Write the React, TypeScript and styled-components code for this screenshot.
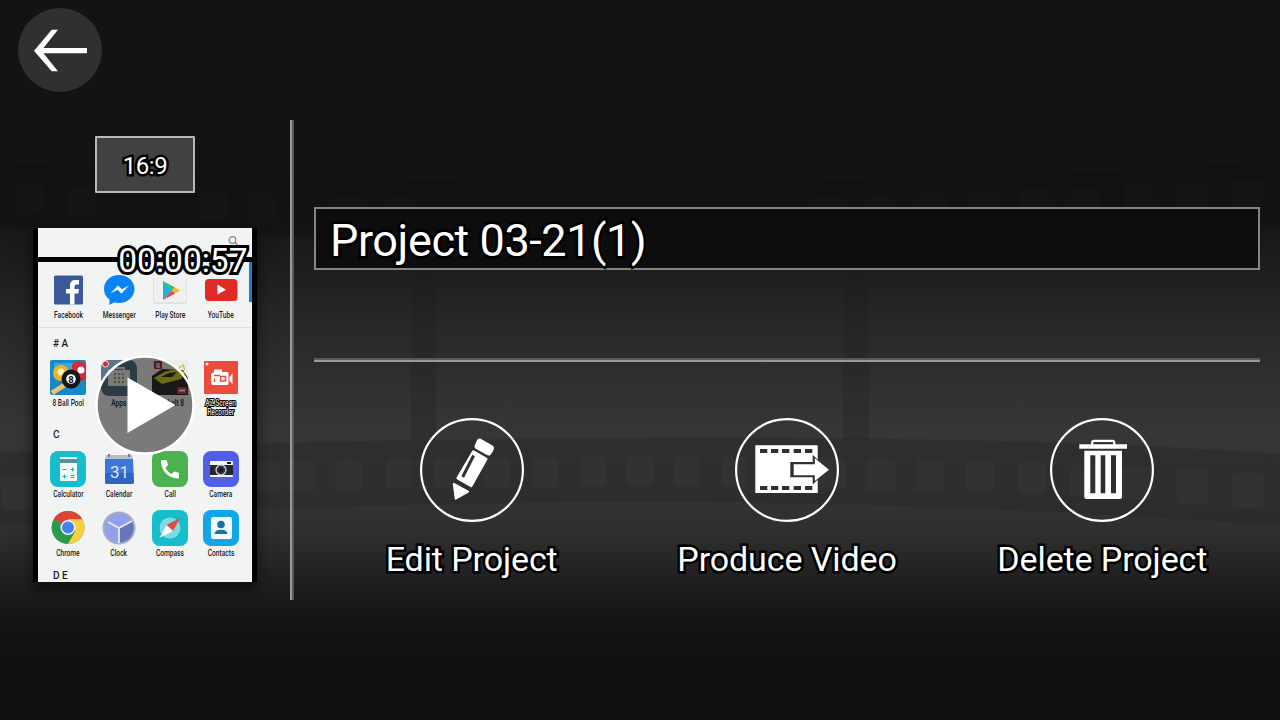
import React from 'react';
import styled, { createGlobalStyle, css } from 'styled-components';

const GlobalStyle = createGlobalStyle`
  * { box-sizing: border-box; }
  body { margin: 0; background: #111; font-family: Roboto, "Liberation Sans", sans-serif; color: #fff; }
`;

const Page = styled.main`
  position: relative;
  width: 1280px;
  height: 720px;
  overflow: hidden;
  display: flex;
  flex-direction: column;
  background: linear-gradient(
    180deg,
    #131313 0, #131313 180px, #161616 215px, #1e1e1e 270px, #282828 325px,
    #303030 385px, #363636 430px, #343434 490px, #2f2f2f 530px, #262626 560px,
    #1c1c1c 592px, #151515 620px, #111 650px, #0f0f0f 720px
  );
`;

const Backdrop = styled.svg`
  position: absolute;
  inset: 0;
`;

const outlined = css<{ $outline?: number }>`
  -webkit-text-stroke: ${({ $outline = 5 }) => $outline}px #000;
  paint-order: stroke fill;
`;

const Header = styled.header`
  position: relative;
  height: 120px;
  padding: 8px 18px;
`;

const BackButton = styled.button`
  display: block;
  width: 84px;
  height: 84px;
  padding: 0;
  border: 0;
  border-radius: 50%;
  background: #303030;
`;

const Body = styled.div`
  position: relative;
  display: flex;
  height: 480px;
`;

const Sidebar = styled.aside`
  width: 290px;
  padding-top: 16px;
  display: flex;
  flex-direction: column;
  align-items: center;
  gap: 35px;
`;

const Ratio = styled.div`
  width: 100px;
  height: 57px;
  border: 2px solid #b8b8b8;
  border-radius: 1px;
  background: #414141;
  display: flex;
  align-items: center;
  justify-content: center;
  font-size: 24px;
  line-height: 28px;
  letter-spacing: -0.4px;
  padding-top: 2px;
  ${outlined}
`;

const VerticalRule = styled.div`
  width: 4px;
  border-left: 2px solid #999;
  border-right: 2px solid #595959;
`;

const Main = styled.section`
  flex: 1;
  padding: 87px 20px 0;
  display: flex;
  flex-direction: column;
`;

const NameField = styled.div`
  height: 63px;
  border: 2px solid #858585;
  background: #0d0d0d;
  padding: 4px 14px 0;
  font-size: 45px;
  line-height: 56px;
  letter-spacing: -0.42px;
  white-space: nowrap;
  ${outlined}
`;

const Rule = styled.div`
  height: 4px;
  margin: 88px 0 56px;
  border-top: 2px solid #595959;
  border-bottom: 2px solid #999;
`;

const Actions = styled.nav`
  display: grid;
  grid-template-columns: repeat(3, 1fr);
`;

const Action = styled.div`
  display: flex;
  flex-direction: column;
  align-items: center;
  gap: 17px;
`;

const ActionLabel = styled.span`
  font-size: 34px;
  line-height: 40px;
  letter-spacing: -0.1px;
  white-space: nowrap;
  ${outlined}
`;

const Preview = styled.div`
  position: relative;
  width: 224px;
  height: 354px;
  padding: 0 5px;
  background: #000;
  box-shadow: 0 6px 14px rgba(0, 0, 0, 0.55);
`;

const Screen = styled.div`
  height: 354px;
  overflow: hidden;
  background: #f2f4f3;
  color: #1c1c1c;
`;

const SearchBar = styled.div`
  height: 34px;
  display: flex;
  justify-content: flex-end;
  padding: 7px 13px 0 0;
  border-bottom: 5px solid #000;
`;

const AppGrid = styled.div<{ $height: number; $top?: number; $line?: boolean }>`
  display: grid;
  grid-template-columns: repeat(4, 51px);
  height: ${({ $height }) => $height}px;
  padding: ${({ $top = 0 }) => $top}px 0 0 4.5px;
  border-bottom: ${({ $line }) => ($line ? '1px solid #dfe1e0' : '0')};
`;

const AppCell = styled.div`
  display: flex;
  flex-direction: column;
  align-items: center;
  svg { flex: none; display: block; overflow: visible; margin-left: -1px; }
`;

const AppLabel = styled.span<{ $selected?: boolean }>`
  margin-top: 3px;
  font-size: 8.5px;
  line-height: 8.5px;
  font-weight: 500;
  text-align: center;
  white-space: pre;
  transform: translateY(0.4px) scaleX(0.78);
  ${({ $selected }) =>
    $selected && css`color: #ddd; -webkit-text-stroke: 2.2px #000; paint-order: stroke fill;`}
`;

const Section = styled.div<{ $height: number; $top: number }>`
  height: ${({ $height }) => $height}px;
  padding: ${({ $top }) => $top}px 0 0 15px;
  font-size: 10px;
  line-height: 12px;
  font-weight: 500;
`;

const ScrollMark = styled.div`
  position: absolute;
  top: 34px;
  right: 5px;
  width: 3px;
  height: 40px;
  background: #1d80cf;
`;

const Duration = styled.div`
  position: absolute;
  top: 13px;
  right: 9.5px;
  font-size: 33.5px;
  line-height: 40px;
  white-space: nowrap;
  -webkit-text-stroke: 6px #000;
  paint-order: stroke fill;
`;

const PlayButton = styled.svg`
  position: absolute;
  left: 62px;
  top: 127px;
`;

const squares: [number, number, number][] = [
  [17, 491, 32], [215, 479, 28], [265, 476, 28], [301, 474, 28], [349, 473, 27], [399, 472, 27],
  [447, 471, 27], [497, 471, 27], [545, 471, 27], [593, 470, 27], [640, 470, 27], [687, 470, 27],
  [735, 470, 27], [784, 471, 27], [833, 472, 27], [881, 473, 28], [930, 474, 28], [980, 475, 28],
  [1032, 477, 29], [1085, 479, 29], [1137, 482, 30], [1192, 485, 31], [1248, 489, 32],
];
const topSquares: [number, number][] = [
  [30, 198], [82, 201], [213, 206], [262, 208], [350, 211], [400, 212], [830, 211], [880, 210], [933, 208],
  [983, 206], [1034, 204], [1085, 202], [1139, 200], [1192, 198], [1248, 195],
];

const FilmBackdrop = () => (
  <Backdrop width="1280" height="720" viewBox="0 0 1280 720">
    <path d="M0 162Q250 182 640 182T1280 160V225Q960 240 640 240T0 228Z" fill="#101010" opacity=".5" />
    {topSquares.map(([x, y]) => (
      <rect key={x} x={x - 15} y={y - 15} width="30" height="30" rx="4" fill="#1a1a1a" opacity=".25" />
    ))}
    <path d="M411 236H436V440H411ZM843 236H869V440H843Z" fill="#1c1c1c" opacity=".22" />
    <path d="M0 453Q250 440 640 438T1280 454V526Q960 502 640 502T0 524Z" fill="#262626" opacity=".4" />
    {squares.map(([x, y, s]) => (
      <rect key={x} x={x - s / 2} y={y - s / 2} width={s} height={s + 3} rx="4" fill="#3a3a3a" opacity=".42" />
    ))}
  </Backdrop>
);

const BackIcon = () => (
  <svg width="84" height="84" viewBox="0 0 84 84">
    <path fill="#fff" d="M16 42.7L33.7 21.7H39.9L25.5 40H69V45.3H25.5L39.9 63.3H33.7Z" />
  </svg>
);

const Ring = ({ children }: { children: React.ReactNode }) => (
  <svg width="104" height="104" viewBox="0 0 104 104">
    <circle cx="52" cy="52" r="50.9" fill="none" stroke="#fff" strokeWidth="2.2" />
    {children}
  </svg>
);

const PencilIcon = () => (
  <Ring>
    <g fill="#fff" stroke="#fff" strokeLinejoin="round">
      <path strokeWidth="6" d="M59.6 23.6L71 30Q71 31.300 68.400 34.500L57.600 28.400Z" />
      <path strokeWidth="3" d="M53.3 33.9L66 41.1L51.2 67.6L38 60.1Z" />
      <path strokeWidth="2" d="M33.8 66L48.1 73.6L35.7 80.7Z" />
    </g>
    <path d="M53.6 37.5L42.7 59" stroke="#303030" strokeWidth="3" />
  </Ring>
);

const ProduceIcon = () => (
  <Ring>
    <path fill="#fff" d="M20.3 27.3H82.7V75H20.3Z" />
    {[25, 36, 47, 58.7, 70].map((x) => (
      <path key={x} fill="#303030" d={`M${x} 31h7.3v4h-7.3zM${x} 68h7.3v4h-7.3z`} />
    ))}
    <path fill="#303030" d="M55.3 44H77.7V36.8L83.5 42.5L95 51.7L83.5 61L77.7 66.5V59.3H55.3Z" />
    <path fill="#fff" d="M58.7 46.3H79.8V40.2L94 51.7L79.8 63V57.3H58.7Z" />
  </Ring>
);

const TrashIcon = () => (
  <Ring>
    <path d="M42.2 27V24.4Q42.2 22.8 44 22.8H62.6Q64.2 22.8 64.2 24.4V27" fill="none" stroke="#fff" strokeWidth="2.2" />
    <path fill="#fff" d="M29.3 26.3H77V30.7H29.3Z" />
    <path
      fill="#fff"
      fillRule="evenodd"
      d="M34.3 32.7H72V79Q72 81 70 81H36.3Q34.3 81 34.3 79ZM40.3 37.3V75.3H45.3V37.3ZM50.7 37.3V75.3H55.3V37.3ZM61 37.3V75.3H66V37.3Z"
    />
  </Ring>
);

const Tile = ({ fill, children }: { fill: string; children: React.ReactNode }) => (
  <svg width="36" height="36" viewBox="0 0 36 36">
    <rect width="36" height="36" rx="8" fill={fill} />
    {children}
  </svg>
);

const Icon = ({ children }: { children: React.ReactNode }) => (
  <svg width="36" height="36" viewBox="0 0 36 36">{children}</svg>
);

const FacebookIcon = () => (
  <Icon>
    <rect x="4" y="3.5" width="29" height="29" rx="1.5" fill="#3c5a99" />
    <path fill="#fff" d="M20 32.5V21.5H16V17H20V13.5Q20 8 25.5 8H29V12.5H26.5Q24.5 12.5 24.5 14.5V17H29L28.4 21.5H24.5V32.5Z" />
  </Icon>
);
const MessengerIcon = () => (
  <Icon>
    <path fill="#0a84f5" d="M18 3C9.5 3 3 9 3 17C3 21.500 5 25 8.400 27.500V33L13.500 30.300C15 30.700 16.500 31 18 31C26.500 31 33.500 25 33.500 17S26.500 3 18 3Z" />
    <path fill="#fff" d="M9.500 21.500L17 13.500L21 17.300L28 13.500L20.500 21.500L16.500 17.700Z" />
  </Icon>
);
const PlayStoreIcon = () => (
  <Icon>
    <path fill="#e0e1e2" d="M1 6H35V30Q35 32 33 32H3Q1 32 1 30Z" />
    <path fill="#f0f0f0" d="M2 6H34V30H2Z" />
    <path fill="#19b5d8" d="M11 9V28L20 18.500Z" />
    <path fill="#2bc46d" d="M11 9L23 15.500L20 18.500Z" />
    <path fill="#e8414f" d="M11 28L23 21.500L20 18.500Z" />
    <path fill="#f7b52b" d="M23 15.500L28 18.500L23 21.500L20 18.500Z" />
  </Icon>
);
const YouTubeIcon = () => (
  <Icon>
    <rect x="2" y="7" width="32.500" height="22" rx="4" fill="#df2a26" />
    <path fill="#fff" d="M14.500 12.500L23 17.700L14.500 22.500Z" />
  </Icon>
);
const PoolIcon = () => (
  <Icon>
    <rect width="36" height="35" rx="2" fill="#1689c6" />
    <path d="M4 3H32V12H4Z" fill="#56b9e5" opacity=".6" />
    <circle cx="11" cy="13" r="8" fill="#f1b51b" />
    <circle cx="11" cy="12" r="3.500" fill="#fff2c2" />
    <path d="M22 5A8 8 0 0 1 36 6V18A8 8 0 0 1 22 16Z" fill="#d22b3b" />
    <circle cx="31" cy="10" r="3.500" fill="#fff" />
    <path d="M2 33L16 24" stroke="#ecc277" strokeWidth="5" />
    <circle cx="21" cy="19" r="9.500" fill="#161616" />
    <circle cx="21" cy="19" r="4.800" fill="#fff" />
    <text x="21" y="22.500" fontSize="9.500" fontWeight="700" textAnchor="middle" fill="#111">8</text>
  </Icon>
);
const AppsIcon = () => (
  <Tile fill="#587789">
    <path d="M13 10V8H23V10" fill="none" stroke="#e9eef0" strokeWidth="2" />
    <rect x="7" y="10" width="22" height="16" rx="1" fill="#f1f3f3" />
    {[14, 18, 22].map((x) => [14, 18, 22].map((y) => (
      <rect key={`${x}-${y}`} x={x - 1} y={y - 1} width="2" height="2" fill={y === 14 ? '#c5a756' : '#a3a86b'} />
    )))}
    <circle cx="4.500" cy="4" r="3" fill="#dd2036" stroke="#fff" strokeWidth=".8" />
  </Tile>
);
const AsphaltIcon = () => (
  <Icon>
    <rect width="36" height="35" rx="2" fill="#eceee6" />
    <path fill="#30302e" d="M0 16L10 9L31 10L36 18V35H0Z" />
    <path fill="#d5d52e" d="M2 18L12 12L26 8L33 13L29 19L10 24Z" />
    <path fill="#343419" d="M9 17L17 13L25 12L20 17Z" />
    <path d="M27 8L31 5L33 10" stroke="#c2c75a" fill="none" strokeWidth="1.500" />
    <rect x="2" y="1" width="8" height="8" rx="1" fill="#b42a32" />
    <text x="6" y="8" fontSize="8" fontWeight="700" textAnchor="middle" fill="#fff">8</text>
    <rect x="25" y="27" width="10" height="7" rx="1" fill="#d43c50" />
    <path d="M27 30.500H33" stroke="#fff" strokeWidth="2" />
  </Icon>
);
const RecorderIcon = () => (
  <Icon>
    <rect x="1" y="1" width="34" height="33" rx="1" fill="#ec4c3b" />
    <circle cx="4" cy="4" r="1.500" fill="#fff" />
    <path fill="#fff" d="M11 9.500H19V12H24Q25.500 12 25.500 14V23Q25.500 25 24 25H10Q8 25 8 23V15Q8 13 11 12.500Z" />
    <path fill="#fff" d="M26.500 17L29.500 13.500V24L26.500 21Z" />
    <path d="M11 15.500H17M11.500 18.500V22M17.500 16.500H22.500V21H17.500Z" stroke="#ec4c3b" strokeWidth="1.500" fill="none" />
  </Icon>
);
const CalculatorIcon = () => (
  <Tile fill="#17bccd">
    <rect x="10" y="6" width="17" height="24" rx="1" fill="#f3fafa" />
    <path d="M10 8H27V12H10Z" fill="#598f99" />
    <path d="M12.500 18.500H16.500M20.500 18.500H24.500M22.500 16.500V20.500M12.500 25.500H16.500M14.500 23.500V27.500M20.500 24.500H24.500M20.500 26.500H24.500" stroke="#18a9b8" />
  </Tile>
);
const CalendarIcon = () => (
  <Icon>
    <path fill="#b7bec9" d="M5 4H31L32 10H4Z" />
    <path d="M8 3V6M28 3V6" stroke="#708095" strokeWidth="2" />
    <path fill="#3f75dc" d="M4 8H32L33 31Q33 33 31 33H6Q4 33 4 31Z" />
    <path fill="#2959b9" d="M4 22H32.500L33 31Q33 33 31 33H6Q4 33 4 31Z" opacity=".6" />
    <text x="18.500" y="26.500" fontSize="17" textAnchor="middle" fill="#dfe9fb">31</text>
  </Icon>
);
const CallIcon = () => (
  <Tile fill="#4ab350">
    <path fill="#fff" d="M10 9Q9 9 9 11Q9.500 18 14 22.500T26 27.500Q27 27.500 27 26.500V22.500Q27 21.800 26 21.500L22.500 20.500L19.500 23Q15.500 21 13.500 17L16 14L15 10Q14.800 9 14 9Z" />
  </Tile>
);
const CameraIcon = () => (
  <Tile fill="#515fe8">
    <rect x="7" y="10" width="23" height="16" rx="1" fill="#f5f5f5" />
    <rect x="7" y="14" width="23" height="10" fill="#242731" />
    <rect x="24" y="11" width="4" height="2" fill="#16181d" />
    <circle cx="18" cy="19" r="5" fill="#303744" stroke="#dadde2" strokeWidth="1.200" />
    <circle cx="18" cy="19" r="2.500" fill="#151820" />
  </Tile>
);
const ChromeIcon = () => (
  <Icon>
    <circle cx="18" cy="17.500" r="16.500" fill="#289b4e" />
    <path fill="#db4536" d="M18 17.500L3.700 9.300A16.500 16.500 0 0 1 32.300 9.300H18Z" />
    <path fill="#fbce3f" d="M32.300 9.300A16.500 16.500 0 0 1 18 34L25 21.500L18 9.300Z" />
    <circle cx="18" cy="17.500" r="7.500" fill="#f3f3f3" />
    <circle cx="18" cy="17.500" r="6" fill="#4381ec" />
  </Icon>
);
const ClockIcon = () => (
  <Icon>
    <circle cx="18" cy="18" r="16.500" fill="#a5abc8" />
    <circle cx="18" cy="18" r="14.500" fill="#929fea" />
    <path d="M18 18V32.500A14.500 14.500 0 0 0 31 11.500Z" fill="#6775bb" />
    <path d="M7 12L18 18L31 11M18 18V33" stroke="#e9ebfc" strokeWidth="1.800" fill="none" />
  </Icon>
);
const CompassIcon = () => (
  <Tile fill="#17bccd">
    <circle cx="18" cy="18" r="10.500" fill="#7cdce4" />
    <path fill="#ea4742" d="M28 8L14.500 15L21 21Z" />
    <path fill="#fff" d="M7.500 28L14.500 15L21 21Z" />
  </Tile>
);
const ContactsIcon = () => (
  <Tile fill="#11a6e9">
    <rect x="8" y="7" width="21" height="22" rx="2" fill="#f3fbff" />
    <circle cx="18" cy="14.500" r="3.800" fill="#1d72a2" />
    <path d="M11.500 24Q12 19.800 18 19.800T24.500 24Z" fill="#1d72a2" />
  </Tile>
);

type AppEntry = { label: string; icon: React.ReactNode; selected?: boolean };

const recent: AppEntry[] = [
  { label: 'Facebook', icon: <FacebookIcon /> },
  { label: 'Messenger', icon: <MessengerIcon /> },
  { label: 'Play Store', icon: <PlayStoreIcon /> },
  { label: 'YouTube', icon: <YouTubeIcon /> },
];
const groupA: AppEntry[] = [
  { label: '8 Ball Pool', icon: <PoolIcon /> },
  { label: 'Apps', icon: <AppsIcon /> },
  { label: 'Asphalt 8', icon: <AsphaltIcon /> },
  { label: 'AZ Screen\nRecorder', icon: <RecorderIcon />, selected: true },
];
const groupC1: AppEntry[] = [
  { label: 'Calculator', icon: <CalculatorIcon /> },
  { label: 'Calendar', icon: <CalendarIcon /> },
  { label: 'Call', icon: <CallIcon /> },
  { label: 'Camera', icon: <CameraIcon /> },
];
const groupC2: AppEntry[] = [
  { label: 'Chrome', icon: <ChromeIcon /> },
  { label: 'Clock', icon: <ClockIcon /> },
  { label: 'Compass', icon: <CompassIcon /> },
  { label: 'Contacts', icon: <ContactsIcon /> },
];

const AppRow = ({ apps, ...rest }: { apps: AppEntry[]; $height: number; $top?: number; $line?: boolean }) => (
  <AppGrid {...rest}>
    {apps.map((app) => (
      <AppCell key={app.label}>
        {app.icon}
        <AppLabel $selected={app.selected}>{app.label}</AppLabel>
      </AppCell>
    ))}
  </AppGrid>
);

const VideoPreview = () => (
  <Preview>
    <Screen>
      <SearchBar>
        <svg width="12" height="12" viewBox="0 0 12 12">
          <circle cx="5.500" cy="5" r="3.300" fill="none" stroke="#888" strokeWidth="1.200" />
          <path d="M8 7.500L11.500 11" stroke="#888" strokeWidth="1.400" />
        </svg>
      </SearchBar>
      <AppRow apps={recent} $height={66} $top={10} $line />
      <Section $height={32} $top={10}># A</Section>
      <AppRow apps={groupA} $height={50} />
      <Section $height={41} $top={19}>C</Section>
      <AppRow apps={groupC1} $height={59} />
      <AppRow apps={groupC2} $height={50} />
      <Section $height={22} $top={10}>D E</Section>
    </Screen>
    <ScrollMark />
    <PlayButton width="100" height="100" viewBox="0 0 100 100">
      <circle cx="50" cy="50" r="48.500" fill="#000" fillOpacity=".5" stroke="#fff" strokeWidth="2.500" />
      <path d="M32.500 22.500L80.500 50L32.500 78Z" fill="#fff" />
    </PlayButton>
    <Duration>00:00:57</Duration>
  </Preview>
);

const actions = [
  { label: 'Edit Project', icon: <PencilIcon /> },
  { label: 'Produce Video', icon: <ProduceIcon /> },
  { label: 'Delete Project', icon: <TrashIcon /> },
];

export default function App() {
  return (
    <Page>
      <GlobalStyle />
      <FilmBackdrop />
      <Header>
        <BackButton aria-label="Back"><BackIcon /></BackButton>
      </Header>
      <Body>
        <Sidebar>
          <Ratio>16:9</Ratio>
          <VideoPreview />
        </Sidebar>
        <VerticalRule />
        <Main>
          <NameField>Project 03-21(1)</NameField>
          <Rule />
          <Actions>
            {actions.map(({ label, icon }) => (
              <Action key={label}>
                {icon}
                <ActionLabel>{label}</ActionLabel>
              </Action>
            ))}
          </Actions>
        </Main>
      </Body>
    </Page>
  );
}
